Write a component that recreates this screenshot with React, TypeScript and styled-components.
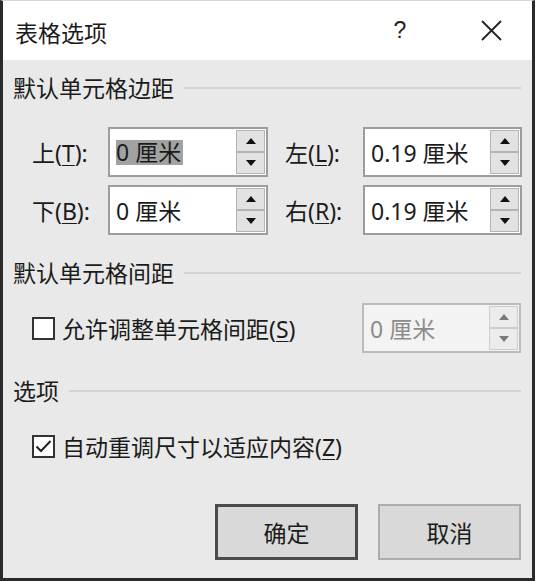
import React from "react";
import styled, { createGlobalStyle } from "styled-components";

const GlobalStyle = createGlobalStyle`
  html, body {
    margin: 0;
    padding: 0;
    background: #ffffff;
  }
  body {
    font-family: "Noto Sans", "Noto Sans CJK SC", sans-serif;
    font-size: 23px;
    color: #1b1b1b;
  }
`;

const Window = styled.div`
  box-sizing: border-box;
  width: 535px;
  height: 581px;
  border-left: 3px solid #2a2a2a;
  border-right: 3px solid #2a2a2a;
  border-bottom: 3px solid #2a2a2a;
  border-top: 1px solid #d8d8d8;
  display: flex;
  flex-direction: column;
  background: #e9e9e9;
`;

const TitleBar = styled.div`
  height: 59px;
  background: #ffffff;
  display: flex;
  align-items: center;
  padding: 0 15px 0 12px;
  flex-shrink: 0;
`;

const Title = styled.div`
  flex: 1;
  margin-top: 2px;
`;

const TitleButton = styled.div<{ $w: number }>`
  width: ${(p) => p.$w}px;
  height: 59px;
  display: flex;
  align-items: center;
  justify-content: center;
  font-family: "Liberation Sans", "Noto Sans", sans-serif;
  color: #222;
`;

const Body = styled.div`
  flex: 1;
  display: flex;
  flex-direction: column;
  padding: 0 11px 0 10px;
`;

const Header = styled.div<{ $top: number }>`
  display: flex;
  align-items: center;
  height: 30px;
  margin-top: ${(p) => p.$top}px;
  gap: 10px;
`;

const Rule = styled.div`
  flex: 1;
  height: 2px;
  background: #d4d4d4;
  margin-top: 2px;
`;

const FieldGrid = styled.div`
  display: grid;
  grid-template-columns: 76px 160px 95px 159px;
  row-gap: 8px;
  margin-top: 25px;
  padding-left: 19px;
  align-items: center;
`;

const FieldLabel = styled.div<{ $pad?: number }>`
  padding-left: ${(p) => p.$pad ?? 0}px;
  white-space: nowrap;

  u {
    text-decoration-thickness: 1px;
    text-underline-offset: 3px;
  }
`;

const SpinBox = styled.div<{ $disabled?: boolean }>`
  box-sizing: border-box;
  height: 50px;
  border: 2px solid ${(p) => (p.$disabled ? "#bcbcbc" : "#9d9d9d")};
  background: ${(p) => (p.$disabled ? "#f3f3f3" : "#ffffff")};
  display: flex;
  align-items: stretch;
  padding: 1px;
`;

const SpinValue = styled.div<{ $disabled?: boolean }>`
  flex: 1;
  display: flex;
  align-items: center;
  padding-left: 5px;
  color: ${(p) => (p.$disabled ? "#8c8c8c" : "#1b1b1b")};
  white-space: nowrap;
`;

const Selected = styled.span`
  background: #a2a2a2;
  line-height: 25px;
  padding: 0 2px 0 0;
`;

const SpinButtons = styled.div`
  width: 29px;
  display: flex;
  flex-direction: column;
`;

const SpinButton = styled.div<{ $disabled?: boolean }>`
  flex: 1;
  box-sizing: border-box;
  border: 1px solid ${(p) => (p.$disabled ? "#cdcdcd" : "#b4b4b4")};
  background: ${(p) => (p.$disabled ? "#ececec" : "#e2e2e2")};
  display: flex;
  align-items: center;
  justify-content: center;
  color: ${(p) => (p.$disabled ? "#7a7a7a" : "#111")};
`;

const CheckRow = styled.div<{ $top: number }>`
  display: flex;
  align-items: center;
  margin-top: ${(p) => p.$top}px;
  padding-left: 19px;
  min-height: 50px;
`;

const CheckLabel = styled.label`
  display: flex;
  align-items: center;
  gap: 7px;
  flex: 1;

  u {
    text-decoration-thickness: 1px;
    text-underline-offset: 3px;
  }
`;

const Box = styled.span`
  box-sizing: border-box;
  width: 23px;
  height: 23px;
  border: 2px solid #333;
  background: #ffffff;
  display: flex;
  align-items: center;
  justify-content: center;
`;

const SideField = styled.div`
  width: 159px;
`;

const ButtonRow = styled.div`
  display: flex;
  justify-content: flex-end;
  gap: 20px;
  margin-top: auto;
  margin-bottom: 18px;
`;

const Button = styled.div<{ $primary?: boolean }>`
  box-sizing: border-box;
  width: 143px;
  height: 56px;
  background: #d9d9d9;
  border: ${(p) => (p.$primary ? "3px solid #4b4b4b" : "2px solid #adadad")};
  display: flex;
  align-items: center;
  justify-content: center;
`;

const Arrow = ({ up }: { up?: boolean }) => (
  <svg width="10" height="6" viewBox="0 0 10 6">
    <path d={up ? "M0 6 L5 0 L10 6 Z" : "M0 0 L5 6 L10 0 Z"} fill="currentColor" />
  </svg>
);

const Spinner = ({ disabled }: { disabled?: boolean }) => (
  <SpinButtons>
    <SpinButton $disabled={disabled}>
      <Arrow up />
    </SpinButton>
    <SpinButton $disabled={disabled}>
      <Arrow />
    </SpinButton>
  </SpinButtons>
);

const Field = ({ value, selected, disabled }: { value: string; selected?: boolean; disabled?: boolean }) => (
  <SpinBox $disabled={disabled}>
    <SpinValue $disabled={disabled}>{selected ? <Selected>{value}</Selected> : value}</SpinValue>
    <Spinner disabled={disabled} />
  </SpinBox>
);

export default function App() {
  return (
    <>
      <GlobalStyle />
      <Window>
        <TitleBar>
          <Title>表格选项</Title>
          <TitleButton $w={36}>?</TitleButton>
          <TitleButton $w={47} />
          <TitleButton $w={52}>
            <svg width="21" height="21" viewBox="0 0 21 21">
              <path d="M1 1 L20 20 M20 1 L1 20" stroke="#222" strokeWidth="1.8" />
            </svg>
          </TitleButton>
        </TitleBar>
        <Body>
          <Header $top={12}>
            默认单元格边距
            <Rule />
          </Header>
          <FieldGrid>
            <FieldLabel>上(<u>T</u>):</FieldLabel>
            <Field value="0 厘米" selected />
            <FieldLabel $pad={17}>左(<u>L</u>):</FieldLabel>
            <Field value="0.19 厘米" />
            <FieldLabel>下(<u>B</u>):</FieldLabel>
            <Field value="0 厘米" />
            <FieldLabel $pad={17}>右(<u>R</u>):</FieldLabel>
            <Field value="0.19 厘米" />
          </FieldGrid>
          <Header $top={22}>
            默认单元格间距
            <Rule />
          </Header>
          <CheckRow $top={16}>
            <CheckLabel>
              <Box />
              <span>允许调整单元格间距(<u>S</u>)</span>
            </CheckLabel>
            <SideField>
              <Field value="0 厘米" disabled />
            </SideField>
          </CheckRow>
          <Header $top={22}>
            选项
            <Rule />
          </Header>
          <CheckRow $top={16}>
            <CheckLabel>
              <Box>
                <svg width="17" height="15" viewBox="0 0 17 15">
                  <path d="M1.5 7.5 L6 12 L15.5 2" stroke="#222" strokeWidth="2" fill="none" />
                </svg>
              </Box>
              <span>自动重调尺寸以适应内容(<u>Z</u>)</span>
            </CheckLabel>
          </CheckRow>
          <ButtonRow>
            <Button $primary>确定</Button>
            <Button>取消</Button>
          </ButtonRow>
        </Body>
      </Window>
    </>
  );
}
